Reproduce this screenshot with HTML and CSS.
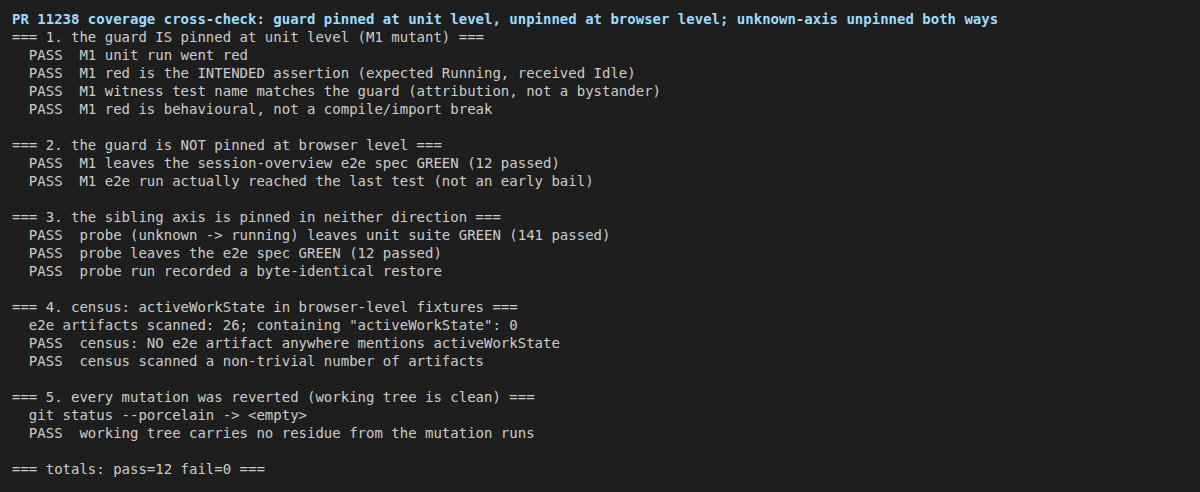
FILE: index.html
```html
<!DOCTYPE html>
<html>
<head>
<meta charset="utf-8">
<link rel="stylesheet" href="styles.css">
</head>
<body>
<pre class="term"><span class="title">PR 11238 coverage cross-check: guard pinned at unit level, unpinned at browser level; unknown-axis unpinned both ways</span>
=== 1. the guard IS pinned at unit level (M1 mutant) ===
  PASS  M1 unit run went red
  PASS  M1 red is the INTENDED assertion (expected Running, received Idle)
  PASS  M1 witness test name matches the guard (attribution, not a bystander)
  PASS  M1 red is behavioural, not a compile/import break

=== 2. the guard is NOT pinned at browser level ===
  PASS  M1 leaves the session-overview e2e spec GREEN (12 passed)
  PASS  M1 e2e run actually reached the last test (not an early bail)

=== 3. the sibling axis is pinned in neither direction ===
  PASS  probe (unknown -&gt; running) leaves unit suite GREEN (141 passed)
  PASS  probe leaves the e2e spec GREEN (12 passed)
  PASS  probe run recorded a byte-identical restore

=== 4. census: activeWorkState in browser-level fixtures ===
  e2e artifacts scanned: 26; containing "activeWorkState": 0
  PASS  census: NO e2e artifact anywhere mentions activeWorkState
  PASS  census scanned a non-trivial number of artifacts

=== 5. every mutation was reverted (working tree is clean) ===
  git status --porcelain -&gt; &lt;empty&gt;
  PASS  working tree carries no residue from the mutation runs

=== totals: pass=12 fail=0 ===</pre>
</body>
</html>
```
FILE: styles.css
```css
html, body {
  margin: 0;
  background: #1e1e1e;
  height: 100%;
}
.term {
  margin: 0;
  padding: 10px 12px;
  font-family: "DejaVu Sans Mono", monospace;
  font-size: 14px;
  line-height: 18px;
  color: #cccccc;
  white-space: pre;
}
.title {
  color: #9cdcfe;
  font-weight: bold;
}
```
